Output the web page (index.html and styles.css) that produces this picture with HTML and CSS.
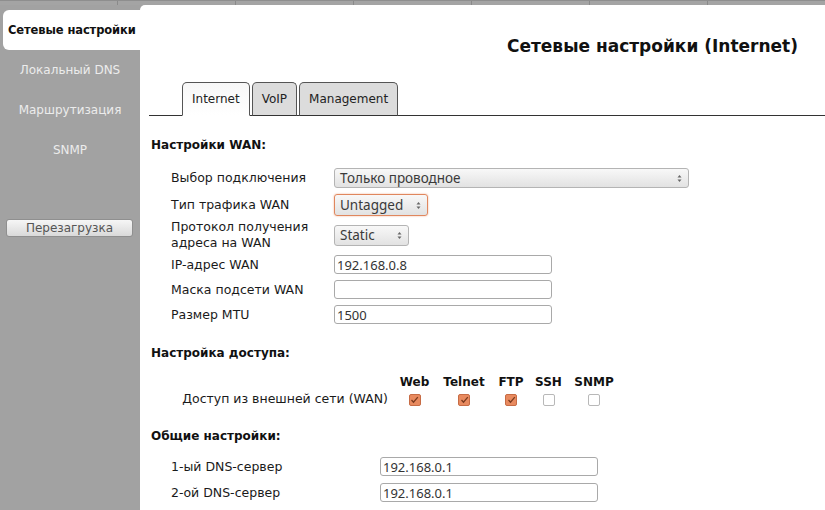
FILE: index.html
```html
<!DOCTYPE html>
<html lang="ru">
<head>
<meta charset="utf-8">
<title>Сетевые настройки</title>
<link rel="stylesheet" href="styles.css">
</head>
<body>
<div class="top"><span class="seg"></span><span class="seg"></span><span class="seg"></span><span class="seg"></span><span class="seg"></span><span class="seg"></span><span class="seg"></span></div>
<div class="layout">
  <nav class="side">
    <a class="item active">Сетевые настройки</a>
    <a class="item">Локальный DNS</a>
    <a class="item">Маршрутизация</a>
    <a class="item">SNMP</a>
    <button class="reboot">Перезагрузка</button>
  </nav>
  <main class="panel">
    <h1 class="title">Сетевые настройки (Internet)</h1>
    <div class="tabs">
      <span class="tab active">Internet</span>
      <span class="tab">VoIP</span>
      <span class="tab">Management</span>
    </div>

    <h2 class="section s-wan">Настройки WAN:</h2>
    <div class="form">
      <div class="row r1">
        <span class="label">Выбор подключения</span>
        <span class="select wide">Только проводное<svg class="arr" width="7" height="11" viewBox="0 0 7 11"><path d="M1.5 4.5 L3.5 2 L5.5 4.5 Z" /><path d="M1.5 6.5 L3.5 9 L5.5 6.5 Z" /></svg></span>
      </div>
      <div class="row r2">
        <span class="label">Тип трафика WAN</span>
        <span class="select focus">Untagged<svg class="arr" width="7" height="11" viewBox="0 0 7 11"><path d="M1.5 4.5 L3.5 2 L5.5 4.5 Z" /><path d="M1.5 6.5 L3.5 9 L5.5 6.5 Z" /></svg></span>
      </div>
      <div class="row r3">
        <span class="label two">Протокол получения<br>адреса на WAN</span>
        <span class="select small">Static<svg class="arr" width="7" height="11" viewBox="0 0 7 11"><path d="M1.5 4.5 L3.5 2 L5.5 4.5 Z" /><path d="M1.5 6.5 L3.5 9 L5.5 6.5 Z" /></svg></span>
      </div>
      <div class="row r4">
        <span class="label">IP-адрес WAN</span>
        <span class="input">192.168.0.8</span>
      </div>
      <div class="row r5">
        <span class="label">Маска подсети WAN</span>
        <span class="input"></span>
      </div>
      <div class="row r5">
        <span class="label">Размер MTU</span>
        <span class="input">1500</span>
      </div>
    </div>

    <h2 class="section s-access">Настройка доступа:</h2>
    <div class="access">
      <span class="acc-label"></span>
      <span class="col c1 head">Web</span>
      <span class="col c2 head">Telnet</span>
      <span class="col c3 head">FTP</span>
      <span class="col c4 head">SSH</span>
      <span class="col c5 head">SNMP</span>
      <span class="acc-label">Доступ из внешней сети (WAN)</span>
      <span class="col c1"><span class="cb on"><svg width="9" height="8" viewBox="0 0 9 8"><path d="M1.5 4 L3.5 6.2 L7.8 1.2" /></svg></span></span>
      <span class="col c2"><span class="cb on"><svg width="9" height="8" viewBox="0 0 9 8"><path d="M1.5 4 L3.5 6.2 L7.8 1.2" /></svg></span></span>
      <span class="col c3"><span class="cb on"><svg width="9" height="8" viewBox="0 0 9 8"><path d="M1.5 4 L3.5 6.2 L7.8 1.2" /></svg></span></span>
      <span class="col c4"><span class="cb"></span></span>
      <span class="col c5"><span class="cb"></span></span>
    </div>

    <h2 class="section s-common">Общие настройки:</h2>
    <div class="form dns">
      <div class="row r4">
        <span class="label lw">1-ый DNS-сервер</span>
        <span class="input">192.168.0.1</span>
      </div>
      <div class="row r5">
        <span class="label lw">2-ой DNS-сервер</span>
        <span class="input">192.168.0.1</span>
      </div>
      <div class="row r6">
        <span class="label lw">Включить локальный</span>
      </div>
    </div>
  </main>
</div>
</body>
</html>
```

FILE: styles.css
```css
* { box-sizing: border-box; }

html, body {
  margin: 0;
  height: 100%;
  overflow: hidden;
}

body {
  background: #a2a2a2;
  font-family: "DejaVu Sans", Verdana, sans-serif;
  font-size: 12px;
  color: #1a1a1a;
}

.top {
  height: 5px;
  display: flex;
  border-top: 1px solid #8e8e8e;
  background: #a4a4a4;
}

.top .seg {
  flex: 1;
  border-left: 1px solid #8a8a8a;
}

.top .seg:first-child { border-left: none; }

.layout {
  display: flex;
  height: 505px;
}

.side {
  width: 140px;
  flex: none;
  padding-top: 5px;
  display: flex;
  flex-direction: column;
}

.item {
  height: 40px;
  display: flex;
  align-items: center;
  justify-content: center;
  color: #ececec;
  font-size: 12px;
  text-decoration: none;
  white-space: nowrap;
}

.item.active {
  margin-left: 3px;
  background: #fff;
  color: #111;
  font-weight: bold;
  font-size: 11.5px;
  border-radius: 6px 0 0 6px;
  justify-content: flex-start;
  padding-left: 5px;
  letter-spacing: -0.1px;
}

.reboot {
  margin: 49px 0 0 6px;
  width: 127px;
  height: 18px;
  padding: 0;
  border: 1px solid #8f8f8f;
  border-radius: 3px;
  background: linear-gradient(#f6f6f6, #d9d9d9);
  color: #555;
  font-family: "DejaVu Sans", Verdana, sans-serif;
  font-size: 12px;
  line-height: 16px;
}

.panel {
  flex: 1;
  background: #fff;
  border-top-left-radius: 5px;
  padding: 0 27px 0 9px;
}

.title {
  margin: 30px 0 0;
  font-size: 17px;
  line-height: 22px;
  font-weight: bold;
  text-align: right;
  color: #111;
}

.tabs {
  margin: 24px -27px 0 0;
  height: 35px;
  border-bottom: 1px solid #333;
  display: flex;
  align-items: flex-end;
  gap: 2px;
  padding-left: 33px;
}

.tab {
  height: 34px;
  margin-bottom: -1px;
  display: flex;
  align-items: center;
  padding: 0 9px 1px 9px;
  border: 1px solid #555;
  border-radius: 5px 5px 0 0;
  background: #dcdcdc;
  color: #222;
  font-size: 12px;
}

.tab.active {
  background: linear-gradient(#f7f7f7, #fff);
  border-bottom: 1px solid #fff;
}

.tab:not(.active) {
  border-bottom: 1px solid #333;
}

.section {
  margin: 0 0 0 2px;
  font-size: 12px;
  line-height: 16px;
  font-weight: bold;
  color: #111;
}

.s-wan { margin-top: 21px; }
.s-access { margin-top: 21px; }
.s-common { margin-top: 20px; }

.form {
  margin-left: 22px;
  margin-top: 15px;
  display: flex;
  flex-direction: column;
}

.row {
  display: flex;
  align-items: center;
}

.r1 { height: 20px; }
.r2 { height: 22px; margin-top: 6px; }
.r3 { height: 32px; margin-top: 3px; }
.r4 { height: 19px; margin-top: 4px; }
.r5 { height: 19px; margin-top: 6px; }
.r6 { height: 16px; margin-top: 6px; }

.label {
  width: 163px;
  flex: none;
  font-size: 12.5px;
  line-height: 16px;
  color: #1a1a1a;
  white-space: nowrap;
}

.label.lw { width: 209px; }

.select {
  position: relative;
  display: flex;
  align-items: center;
  height: 100%;
  padding-left: 5px;
  border: 1px solid #b4b4b4;
  border-radius: 3px;
  background: linear-gradient(#f8f8f8, #e2e2e2);
  font-family: "Noto Sans", "Open Sans", sans-serif;
  font-size: 13.5px;
  color: #3a3a3a;
}

.select.wide { width: 355px; }
.select.focus { width: 94px; border-color: #e0875e; box-shadow: 0 0 2px #f0b090; }
.select.small { width: 75px; height: 21px; }

.arr {
  position: absolute;
  right: 5px;
  top: 50%;
  margin-top: -5.5px;
  fill: #666;
  stroke: none;
}

.input {
  width: 218px;
  height: 100%;
  display: flex;
  align-items: center;
  padding-left: 2px;
  border: 1px solid #a9a9a9;
  border-radius: 3px;
  background: #fff;
  font-family: "Noto Sans", "Open Sans", sans-serif;
  font-size: 13px;
  color: #333;
}

.access {
  margin-top: 13px;
  margin-left: 22px;
  display: grid;
  grid-template-columns: 223px 41px 58px 36px 39px 52px;
  grid-template-rows: 16px 18px;
  align-items: center;
}

.acc-label {
  text-align: right;
  padding-right: 6px;
  font-size: 12.5px;
  line-height: 16px;
  white-space: nowrap;
}

.col {
  display: flex;
  justify-content: center;
  align-items: center;
}

.col.head {
  font-weight: bold;
  color: #111;
}

.cb {
  width: 12px;
  height: 12px;
  border: 1px solid #b8b8b8;
  border-radius: 2px;
  background: #fff;
  display: flex;
  align-items: center;
  justify-content: center;
  margin-top: 1px;
}

.cb.on {
  background: #e88a5f;
  border-color: #c76c45;
}

.cb svg path {
  fill: none;
  stroke: #7a3a1e;
  stroke-width: 1.3;
}

.dns { margin-top: 13px; }
.dns .r4 { margin-top: 0; }
.dns .r5 { margin-top: 7px; }
```
